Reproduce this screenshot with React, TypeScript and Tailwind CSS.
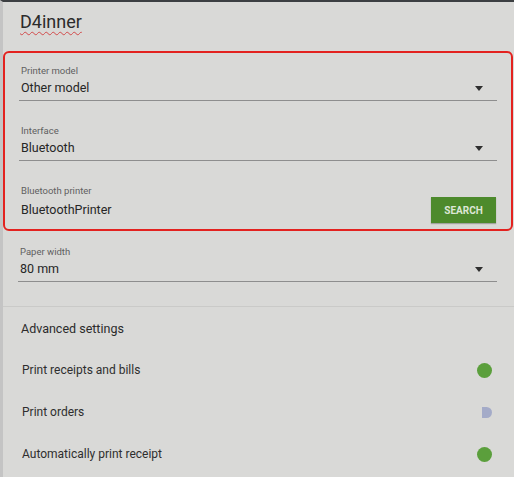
import React from 'react';

function Arrow() {
  return (
    <svg width="8" height="5" viewBox="0 0 8 5" className="shrink-0">
      <path d="M0 0 L8 0 L4 5 Z" fill="#2f2f2f" />
    </svg>
  );
}

function SelectField({ label, value }: { label: string; value: string }) {
  return (
    <div className="flex flex-col">
      <div className="h-[12px] px-[2px] text-[9.5px] leading-[12px] text-[#5f5f5f]">{label}</div>
      <div className="mt-[2px] box-content flex h-[18px] items-center justify-between border-b border-[#8e8e8e] pb-[3px] pl-[2px] pr-[14px]">
        <span className="text-[12.5px] leading-[18px] text-[#262626]">{value}</span>
        <Arrow />
      </div>
    </div>
  );
}

function Toggle({ on }: { on: boolean }) {
  if (on) {
    return <div className="h-[15px] w-[15px] rounded-full bg-[#5b9f3c]" />;
  }
  return (
    <div className="flex h-[15px] w-[15px] items-center justify-end">
      <div className="h-[11px] w-[10px] rounded-l-[3px] rounded-r-full bg-[#a4abc8]" />
    </div>
  );
}

function SwitchRow({ label, on }: { label: string; on: boolean }) {
  return (
    <div className="flex h-[42px] items-center justify-between pl-[19px] pr-[22px]">
      <span className="text-[12px] text-[#2e2e2e]">{label}</span>
      <Toggle on={on} />
    </div>
  );
}

export default function App() {
  return (
    <div
      className="h-[477px] w-[514px] overflow-hidden border-t-[2px] border-l-[3px] border-t-[#3c3f42] border-l-[#c4c4c4] bg-[#d9d9d7]"
      style={{ fontFamily: 'Roboto, "Noto Sans", sans-serif' }}
    >
      {/* Header */}
      <div className="h-[49px] pl-[17px] pt-[9px]">
        <span className="text-[18px] leading-[22px] text-[#2b2b2b] underline decoration-wavy decoration-[#d24a4a] decoration-[1px] underline-offset-[3px]">
          D4inner
        </span>
      </div>

      {/* Printer box */}
      <div className="mr-[1px] rounded-[6px] border-2 border-[#e3221f] pb-[6px] pl-[14px] pr-[14px] pt-[12px]">
        <div className="flex flex-col gap-[24px]">
          <SelectField label="Printer model" value="Other model" />
          <SelectField label="Interface" value="Bluetooth" />
          <div className="flex flex-col">
            <div className="h-[12px] px-[2px] text-[9.5px] leading-[12px] text-[#5f5f5f]">Bluetooth printer</div>
            <div className="flex h-[26px] items-center justify-between pl-[2px] pr-[1px]">
              <span className="text-[12.5px] text-[#262626]">BluetoothPrinter</span>
              <button className="h-[26px] w-[65px] bg-[#4d8a2c] text-[10px] font-bold text-[#dde7d6] shadow-[0_1px_1px_rgba(0,0,0,0.25)]">
                SEARCH
              </button>
            </div>
          </div>
        </div>
      </div>

      {/* Paper width */}
      <div className="pl-[15px] pr-[17px] pt-[15px]">
        <SelectField label="Paper width" value="80 mm" />
      </div>

      <div className="mt-[24px] border-t border-[#cacac8]" />

      <div className="flex h-[42px] items-center pl-[18px] pt-[2px]">
        <span className="text-[12.5px] text-[#2b2b2b]">Advanced settings</span>
      </div>

      <SwitchRow label="Print receipts and bills" on />
      <SwitchRow label="Print orders" on={false} />
      <SwitchRow label="Automatically print receipt" on />
    </div>
  );
}
